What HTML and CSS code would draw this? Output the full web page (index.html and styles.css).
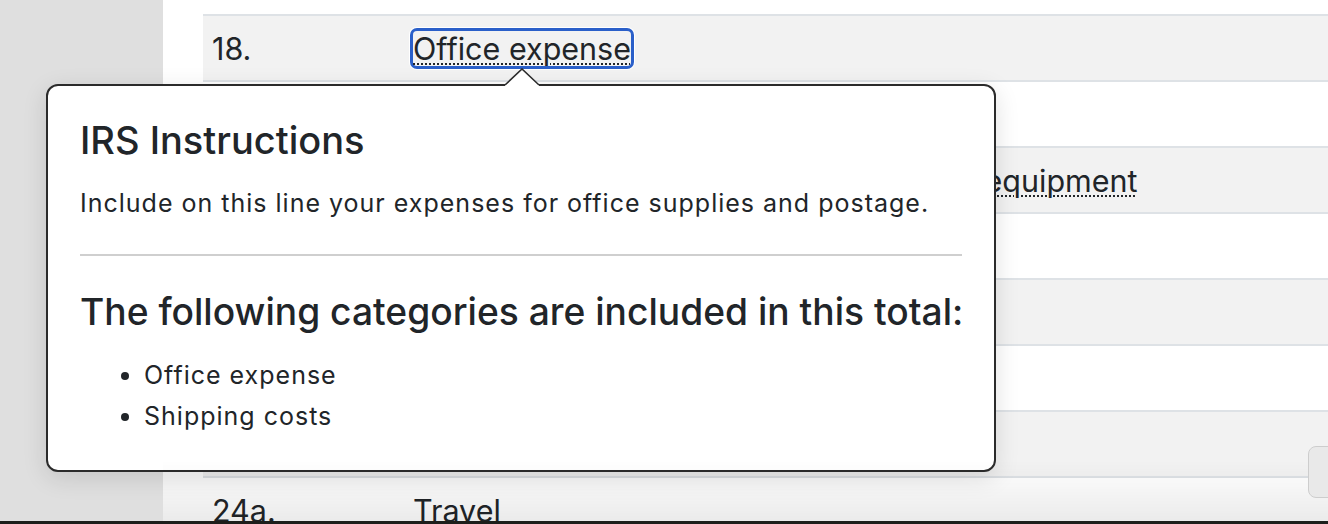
FILE: index.html
```html
<!DOCTYPE html>
<html lang="en">

<head>
    <meta charset="UTF-8">
    <meta name="viewport" content="width=device-width, initial-scale=1.0">
    <title>Schedule C Lines</title>
    <link rel="stylesheet" href="styles.css">
</head>

<body>
    <div class="layout">
        <aside class="sidebar"></aside>
        <main class="main">
            <div class="lines">
                <div class="line shade">
                    <span class="num">18.</span>
                    <span class="label"><abbr class="term focused" tabindex="0">Office expense</abbr></span>
                </div>
                <div class="line">
                    <span class="num">19.</span>
                    <span class="label"><abbr class="term">Pension and profit-sharing plans</abbr></span>
                </div>
                <div class="line shade">
                    <span class="num">20a.</span>
                    <span class="label"><abbr class="term">Rent or lease: vehicles, machinery, and equipment</abbr></span>
                </div>
                <div class="line">
                    <span class="num">20b.</span>
                    <span class="label"><abbr class="term">Other business property</abbr></span>
                </div>
                <div class="line shade">
                    <span class="num">21.</span>
                    <span class="label"><abbr class="term">Repairs and maintenance</abbr></span>
                </div>
                <div class="line">
                    <span class="num">22.</span>
                    <span class="label"><abbr class="term">Supplies</abbr></span>
                </div>
                <div class="line shade">
                    <span class="num">23.</span>
                    <span class="label"><abbr class="term">Taxes and licenses</abbr></span>
                </div>
                <div class="line">
                    <span class="num">24a.</span>
                    <span class="label">Travel</span>
                </div>
            </div>
        </main>
    </div>

    <!-- popover for line 18 -->
    <div class="popover">
        <svg class="popover-arrow" width="34" height="19" viewBox="0 0 34 19">
            <path d="M0 17 L17 1 L34 17 L34 19 L0 19 Z" fill="#fff" />
            <polyline points="0,17 17,1 34,17" fill="none" stroke="#2b2b2b" stroke-width="1.6" />
        </svg>
        <h3>IRS Instructions</h3>
        <p>Include on this line your expenses for office supplies and postage.</p>
        <hr>
        <h3 class="sub">The following categories are included in this total:</h3>
        <ul>
            <li>Office expense</li>
            <li>Shipping costs</li>
        </ul>
    </div>

    <div class="bottom-shade"></div>
    <button class="corner-btn"></button>
    <div class="dock-edge"></div>
</body>

</html>
```

FILE: styles.css
```css
* {
    box-sizing: border-box;
}

body {
    margin: 0;
    height: 524px;
    overflow: hidden;
    font-family: "Inter", "Noto Sans", sans-serif;
    color: #212529;
    background: #fff;
}

.layout {
    display: flex;
    min-height: 100vh;
}

.sidebar {
    flex: none;
    width: 163px;
    background: #dfdfdf;
}

.main {
    flex: 1;
    padding: 14px 0 0 40px;
}

.line {
    display: flex;
    align-items: center;
    height: 66px;
    border-top: 2px solid #dee2e6;
    font-size: 30.5px;
    white-space: nowrap;
}

.line.shade {
    background: #f2f2f2;
}

.num {
    flex: none;
    width: 210px;
    padding-left: 9px;
}

.term {
    display: inline-block;
    line-height: 35px;
    text-decoration: underline dotted;
    text-underline-offset: 4px;
    text-decoration-thickness: 2px;
}

.term.focused {
    border-radius: 4px;
    box-shadow: 0 0 0 3px #2a5fc9, 0 0 0 4px #fff;
}

.popover {
    position: absolute;
    left: 46px;
    top: 84px;
    width: 950px;
    padding: 32px 32px 33px;
    background: #fff;
    border: 2px solid #2b2b2b;
    border-radius: 12px;
    box-shadow: 0 6px 24px rgba(0, 0, 0, 0.12);
}

.popover-arrow {
    position: absolute;
    top: -18px;
    left: 457px;
    display: block;
}

.popover h3 {
    margin: 0 0 21px;
    font-size: 38px;
    font-weight: 500;
    line-height: 1.2;
}

.popover h3.sub {
    margin: 0;
    font-size: 37.2px;
    white-space: nowrap;
}

.popover p {
    margin: 0;
    font-size: 25px;
    letter-spacing: 1px;
    line-height: 36px;
}

.popover hr {
    margin: 33px 0 34px;
    border: 0;
    border-top: 2px solid #cfcfcf;
}

.popover ul {
    margin: 21px 0 0;
    padding-left: 64px;
    font-size: 25px;
    letter-spacing: 1px;
}

.popover li {
    line-height: 41px;
}

.bottom-shade {
    position: fixed;
    left: 163px;
    right: 0;
    bottom: 3px;
    height: 60px;
    background: linear-gradient(to bottom, rgba(0, 0, 0, 0), rgba(0, 0, 0, 0.08));
    pointer-events: none;
}

.corner-btn {
    position: fixed;
    right: -12px;
    bottom: 26px;
    width: 32px;
    height: 52px;
    background: #e9e9e9;
    border: 1px solid #cdcdcd;
    border-radius: 8px;
}

.dock-edge {
    position: fixed;
    left: 0;
    right: 0;
    bottom: 0;
    height: 3px;
    background: #1d1e1b;
}
```
